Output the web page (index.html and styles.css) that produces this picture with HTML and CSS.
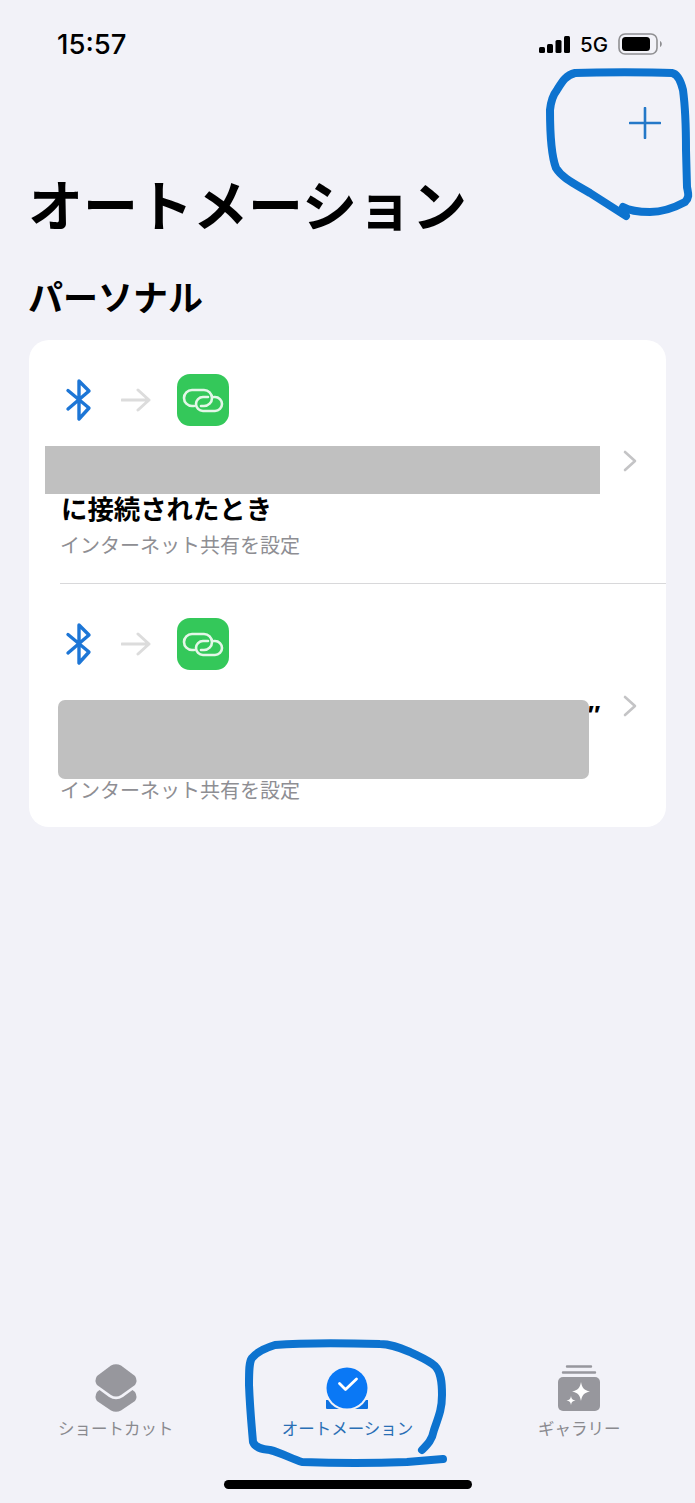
FILE: index.html
```html
<!DOCTYPE html>
<html lang="ja">
<head>
  <meta charset="UTF-8">
  <meta name="viewport" content="width=device-width, initial-scale=1.0">
  <title>オートメーション</title>
  <link rel="stylesheet" href="styles.css">
</head>
<body>
<div class="page">
  <div class="status-bar">
    <span class="time">15:57</span>
    <div class="status-icons">
      <svg class="signal" width="31" height="17" viewBox="0 0 31 17">
        <rect x="0" y="11" width="6" height="6" rx="1.5"/>
        <rect x="8" y="8" width="6" height="9" rx="1.5"/>
        <rect x="16.5" y="4" width="6" height="13" rx="1.5"/>
        <rect x="25" y="0" width="6" height="17" rx="1.5"/>
      </svg>
      <span class="network">5G</span>
      <svg class="battery" width="44" height="22" viewBox="0 0 44 22">
        <rect x="1" y="1" width="38" height="20" rx="6" fill="none" stroke="#8f8f92" stroke-width="1.6"/>
        <rect x="4" y="4" width="28" height="14" rx="3.5" fill="#000"/>
        <path d="M42 8v6c1.2-.6 1.8-1.7 1.8-3s-.6-2.4-1.8-3z" fill="#8f8f92"/>
      </svg>
    </div>
  </div>

  <div class="nav-bar">
    <svg class="add-btn" width="32" height="32" viewBox="0 0 32 32">
      <path d="M16 1v30M1 16h30" fill="none" stroke="#2478c8" stroke-width="2.6" stroke-linecap="round"/>
    </svg>
  </div>

  <h1>オートメーション</h1>
  <h2>パーソナル</h2>

  <div class="card">
    <div class="row">
      <div class="row-icons">
        <svg class="bt" width="30" height="44" viewBox="0 0 30 44">
          <path d="M5 12.500l21 17.500-10 11V3l10 10L5 31" fill="none" stroke="#1d76d6" stroke-width="3.400" stroke-linejoin="round" stroke-linecap="round"/>
        </svg>
        <svg class="arrow" width="30" height="24" viewBox="0 0 30 24">
          <path d="M1 12h27M17 2l11 10-11 10" fill="none" stroke="#dcdcdc" stroke-width="3" stroke-linecap="round" stroke-linejoin="round"/>
        </svg>
        <div class="app-icon">
          <svg width="52" height="52" viewBox="0 0 52 52">
            <path d="M17 32h-2a8 8 0 0 1 0-16h12a8 8 0 0 1 0 16h-3M37 23h1a7 7 0 0 1 0 14H26a7 7 0 0 1 0-14h5" fill="none" stroke="#e4f7e8" stroke-width="2.600" stroke-linecap="round"/>
          </svg>
        </div>
      </div>
      <div class="row-body">
        <div class="row-text">
          <div class="row-title">&nbsp;</div>
          <div class="row-title">に接続されたとき</div>
          <div class="row-sub">インターネット共有を設定</div>
        </div>
        <svg class="chevron" width="14" height="22" viewBox="0 0 14 22">
          <path d="M2 2l10 9-10 9" fill="none" stroke="#c4c4c6" stroke-width="2.600" stroke-linecap="round" stroke-linejoin="round"/>
        </svg>
      </div>
      <div class="mask mask-bar"></div>
    </div>
    <div class="separator"></div>
    <div class="row">
      <div class="row-icons">
        <svg class="bt" width="30" height="44" viewBox="0 0 30 44">
          <path d="M5 12.500l21 17.500-10 11V3l10 10L5 31" fill="none" stroke="#1d76d6" stroke-width="3.400" stroke-linejoin="round" stroke-linecap="round"/>
        </svg>
        <svg class="arrow" width="30" height="24" viewBox="0 0 30 24">
          <path d="M1 12h27M17 2l11 10-11 10" fill="none" stroke="#dcdcdc" stroke-width="3" stroke-linecap="round" stroke-linejoin="round"/>
        </svg>
        <div class="app-icon">
          <svg width="52" height="52" viewBox="0 0 52 52">
            <path d="M17 32h-2a8 8 0 0 1 0-16h12a8 8 0 0 1 0 16h-3M37 23h1a7 7 0 0 1 0 14H26a7 7 0 0 1 0-14h5" fill="none" stroke="#e4f7e8" stroke-width="2.600" stroke-linecap="round"/>
          </svg>
        </div>
      </div>
      <div class="row-body">
        <div class="row-text">
          <div class="row-title quote-line">″</div>
          <div class="row-title">&nbsp;</div>
          <div class="row-sub">インターネット共有を設定</div>
        </div>
        <svg class="chevron" width="14" height="22" viewBox="0 0 14 22">
          <path d="M2 2l10 9-10 9" fill="none" stroke="#c4c4c6" stroke-width="2.600" stroke-linecap="round" stroke-linejoin="round"/>
        </svg>
      </div>
      <div class="mask mask-box"></div>
    </div>
  </div>

  <div class="tab-bar">
    <div class="tab">
      <svg width="44" height="50" viewBox="0 0 44 50">
        <path d="M17 2.500Q22 0 27 2.500L41 13Q44 17.500 41 22L27 32Q22 35 17 32L3 22Q0 17.500 3 13Z" fill="#97979d"/>
        <path d="M5.500 27L15 34Q22 38.500 29 34L38.500 27L41 29Q44 34 41 38L27 47.500Q22 50 17 47.500L3 38Q0 34 3 29Z" fill="#97979d"/>
      </svg>
      <span>ショートカット</span>
    </div>
    <div class="tab active">
      <svg width="44" height="50" viewBox="0 0 44 50">
        <path d="M1 37h42v8a1 1 0 0 1-1 1H2a1 1 0 0 1-1-1z" fill="#0f72e0"/>
        <circle cx="22" cy="25" r="22.500" fill="#f2f2f8"/>
        <circle cx="22" cy="25" r="20.500" fill="#0a78f5"/>
        <path d="M14.500 20.500l6 6 11-10.500" fill="none" stroke="#fff" stroke-width="2.800" stroke-linecap="round" stroke-linejoin="round"/>
      </svg>
      <span>オートメーション</span>
    </div>
    <div class="tab">
      <svg width="44" height="50" viewBox="0 0 44 50">
        <path d="M10 3.500h24M6 9.500h32" fill="none" stroke="#97979d" stroke-width="2.400" stroke-linecap="round"/>
        <rect x="1" y="14" width="42" height="34" rx="5" fill="#97979d"/>
        <path d="M24 19c1 6 3 8 9 9.500-6 1.500-8 3.500-9 9.500-1-6-3-8-9-9.500 6-1.500 8-3.500 9-9.500z" fill="#fff"/>
        <path d="M14 33c.5 3 1.500 4 4.500 4.500-3 .5-4 1.500-4.500 4.500-.5-3-1.500-4-4.500-4.500 3-.5 4-1.500 4.500-4.500z" fill="#fff"/>
      </svg>
      <span>ギャラリー</span>
    </div>
  </div>
  <div class="home-indicator"></div>

  <!-- pen circles drawn over the screen -->
  <svg class="pen-layer" width="695" height="1503" viewBox="0 0 695 1503">
    <path d="M626 216L590 193C575 184 562 178 556 168C551 155 550 130 550 110C551 100 553 95 557 90C562 82 566 75 575 73C600 72 650 72 672 73C678 74 681 82 683 90C685 105 686 130 686 150L687 187C688 193 690 197 685 202C672 209 662 212 650 212C640 212 630 211 623 207" fill="none" stroke="#0d73cf" stroke-width="8" stroke-linecap="round" stroke-linejoin="round"/>
    <path d="M422 1450C428 1444 432 1440 434 1430C438 1418 442 1410 442 1395C442 1382 441 1372 435 1366C428 1360 420 1357 410 1352C398 1347 390 1344 380 1344C340 1343 300 1343 275 1345C262 1349 256 1353 252 1358C249 1362 249 1370 249 1385C250 1410 252 1430 253 1442C255 1447 260 1449 270 1450C282 1453 292 1459 302 1462C330 1463 380 1463 407 1462C420 1461 432 1460 443 1459" fill="none" stroke="#0d73cf" stroke-width="8" stroke-linecap="round" stroke-linejoin="round"/>
  </svg>
</div>
</body>
</html>
```

FILE: styles.css
```css
* { box-sizing: border-box; }
body { margin: 0; background-color: #f2f2f8; font-family: "Noto Sans CJK JP", "Noto Sans", sans-serif; color: #000; }
h1, h2 { margin: 0; }

.page { position: relative; height: 1503px; display: flex; flex-direction: column; overflow: hidden; }

/* status bar */
.status-bar { height: 44px; margin-top: 22px; padding: 0 33px 0 57px; display: flex; align-items: center; justify-content: space-between; }
.time { font-family: Inter, sans-serif; font-size: 27.5px; font-weight: 500; }
.status-icons { display: flex; align-items: center; gap: 10px; }
.network { font-family: Inter, sans-serif; font-size: 20.5px; font-weight: 500; }
.signal { fill: #000; }

.nav-bar { height: 101px; padding: 41px 34px 0 0; display: flex; justify-content: flex-end; align-items: flex-start; }

h1 { font-size: 55px; line-height: 70px; font-weight: 700; padding-left: 28px; }
h2 { margin-top: 39px; font-size: 35px; line-height: 40px; font-weight: 700; padding-left: 28px; }

/* automation list */
.card { margin: 24px 29px 0; background: #fff; border-radius: 20px; }
.row { position: relative; padding: 34px 29px 24px 32px; }
.separator + .row { padding-bottom: 23px; }
.row-icons { display: flex; align-items: center; height: 52px; }
.bt { margin-left: 2px; }
.arrow { margin-left: 28px; }
.app-icon { margin-left: 26px; width: 52px; height: 52px; border-radius: 13px; background: #34c85a; }
.app-icon svg { display: block; }

.row-body { display: flex; align-items: flex-start; gap: 24px; margin-top: 25px; }
.separator + .row .row-body { margin-top: 26px; }
.row-text { flex: 1; min-width: 0; }
.row-title { font-size: 26.4px; line-height: 38px; font-weight: 700; }
.quote-line { text-align: right; font-family: "Liberation Sans", sans-serif; font-style: italic; }
.row-sub { margin: 4px 0 0 -1px; font-size: 20px; line-height: 28px; color: #8e8e93; }
.chevron { margin-top: -1px; flex-shrink: 0; }
.separator { height: 1px; margin-left: 31px; background: #d8d8da; }

/* grey boxes covering device names */
.mask { position: absolute; background: #c0c0c0; }
.mask-bar { left: 16px; top: 106px; width: 555px; height: 48px; }
.mask-box { left: 29px; top: 116px; width: 531px; height: 79px; border-radius: 7px; }

/* bottom tabs */
.tab-bar { margin-top: auto; display: grid; grid-template-columns: repeat(3, 1fr); }
.tab { display: flex; flex-direction: column; align-items: center; color: #8a8a8f; font-size: 16.5px; line-height: 24px; }
.tab svg { display: block; margin-bottom: 3px; }
.tab.active { color: #2a6fb5; }

.home-indicator { width: 248px; height: 9px; margin: 40px auto 14px; border-radius: 5px; background: #000; }

.pen-layer { position: absolute; left: 0; top: 0; pointer-events: none; }
```
